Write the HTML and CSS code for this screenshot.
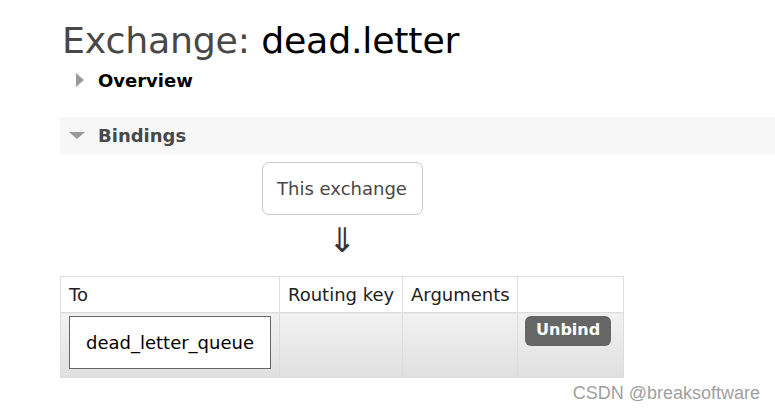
FILE: index.html
```html
<!DOCTYPE html>
<html>
<head>
<meta charset="utf-8">
<link rel="stylesheet" href="styles.css">
</head>
<body>
<div class="page">
  <h1 class="title">Exchange: <b class="name">dead.letter</b></h1>
  <div class="section closed">
    <span class="tri-right"></span><span class="sec-label">Overview</span>
  </div>
  <div class="section open">
    <span class="tri-down"></span><span class="sec-label">Bindings</span>
  </div>
  <div class="flow">
    <div class="this-box">This exchange</div>
    <div class="arrow">⇓</div>
  </div>
  <table class="bindings">
    <colgroup><col class="w-to"><col class="w-rk"><col class="w-args"><col class="w-act"></colgroup>
    <thead>
      <tr><th>To</th><th>Routing key</th><th>Arguments</th><th></th></tr>
    </thead>
    <tbody>
      <tr>
        <td class="c-to"><div class="queue-box">dead_letter_queue</div></td>
        <td></td>
        <td></td>
        <td class="c-act"><span class="btn">Unbind</span></td>
      </tr>
    </tbody>
  </table>
  <div class="watermark">CSDN @breaksoftware</div>
</div>
</body>
</html>
```
FILE: styles.css
```css
html, body { margin: 0; padding: 0; background: #fff; }
body { font-family: "DejaVu Sans", Verdana, sans-serif; color: #484848; width: 775px; height: 411px; overflow: hidden; }
.page { padding-left: 60px; }
.title { margin: 0; padding: 18px 0 0 2px; font-size: 36.3px; font-weight: normal; line-height: 46px; color: #484848; letter-spacing: -0.2px; }
.title .name { font-weight: normal; color: #000; }
.section { display: flex; align-items: center; }
.section.closed { height: 30px; padding-left: 16px; margin-top: 1px; }
.section.open { margin-top: 22px; height: 37px; background: #f7f7f7; padding-left: 9px; }
.tri-right { width: 0; height: 0; border-top: 7px solid transparent; border-bottom: 7px solid transparent; border-left: 8px solid #999; margin-right: 14px; }
.tri-down { width: 0; height: 0; border-left: 8px solid transparent; border-right: 8px solid transparent; border-top: 7px solid #999; margin-right: 13px; }
.sec-label { font-weight: bold; font-size: 18px; }
.closed .sec-label { color: #000; }
.flow { display: flex; flex-direction: column; align-items: center; width: 564px; padding-top: 8px; }
.this-box { border: 1px solid #c8c8c8; border-radius: 7px; width: 159px; height: 51px; display: flex; align-items: center; justify-content: center; font-size: 18px; color: #484848; }
.arrow { font-size: 34px; line-height: 40px; margin-top: 5px; color: #333; height: 56px; }
.bindings { border-collapse: collapse; font-size: 18px; width: 563px; table-layout: fixed; }
.w-to { width: 219px; }
.w-rk { width: 123px; }
.w-args { width: 115px; }
.w-act { width: 106px; }
.bindings th, .bindings td { border: 1px solid #ddd; padding: 0 8px; text-align: left; font-weight: normal; color: #222; white-space: nowrap; }
.bindings th { height: 35px; background: #fff; }
.bindings td { height: 65px; background: linear-gradient(#f2f2f2, #e0e0e0); vertical-align: top; box-sizing: border-box; }
.bindings td.c-to { padding: 3px 8px 0 8px; }
.queue-box { background: #fff; border: 1px solid #666; height: 51px; display: flex; align-items: center; justify-content: center; color: #000; }
.bindings td.c-act { padding: 3px 0 0 7px; }
.btn { display: inline-block; background: #666; color: #fff; font-weight: bold; border-radius: 6px; padding: 0 11px; height: 30px; line-height: 28px; font-size: 16px; }
.watermark { font-family: "Liberation Sans", Arial, sans-serif; font-size: 18px; color: #a0a0a0; text-align: right; padding-right: 15px; margin-top: 5px; }
```
